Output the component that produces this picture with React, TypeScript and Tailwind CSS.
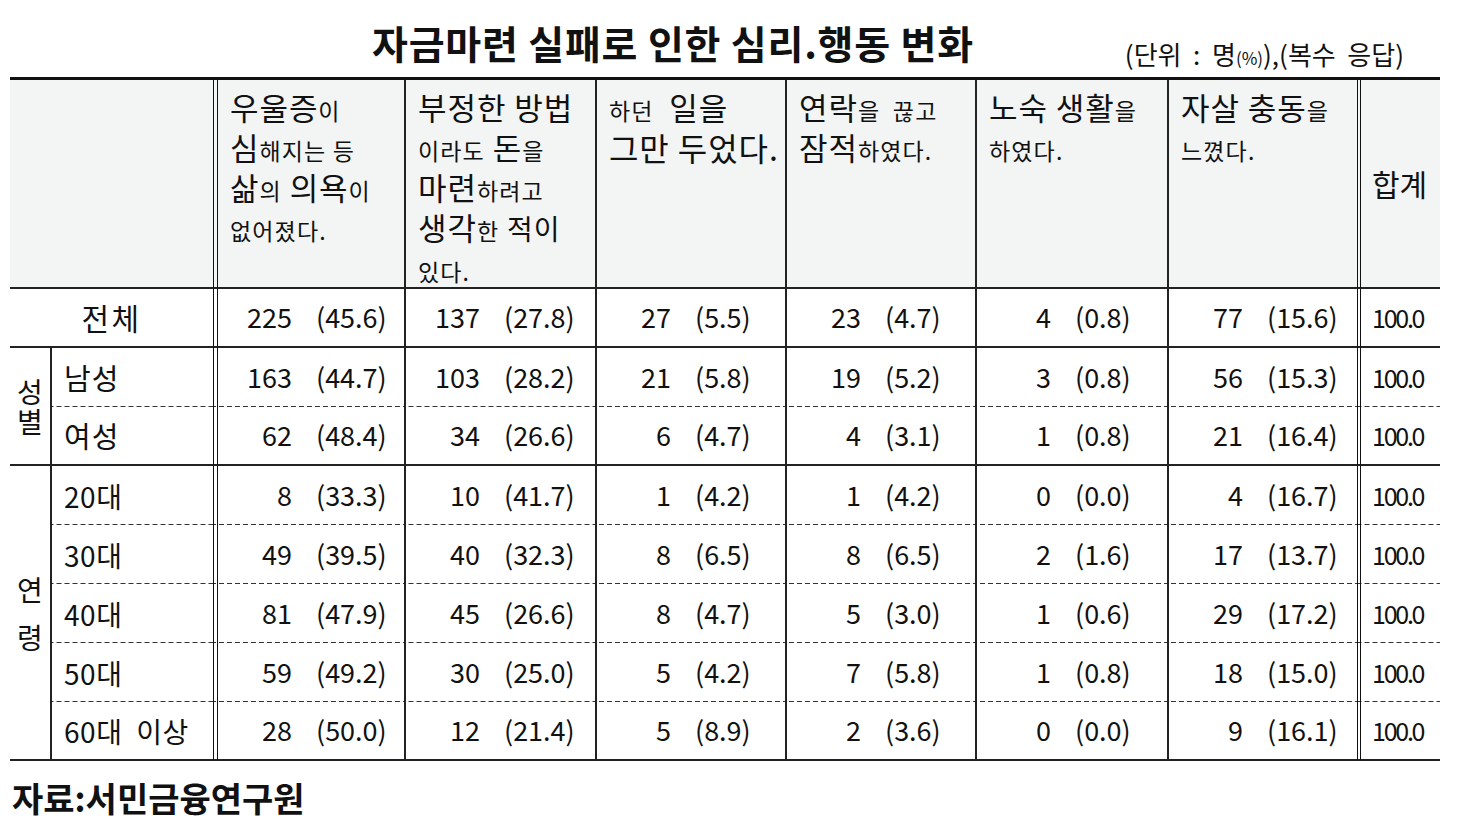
import React from "react";

const font = "[font-family:'Noto_Sans_CJK_KR','Noto_Sans',sans-serif]";

const solidB = "border-b-2 border-b-[#222]";
const dashB = "bg-[linear-gradient(to_right,#333_5px,transparent_5px)] bg-[length:8px_1px] bg-repeat-x bg-bottom";
const rightB = "border-r-2 border-r-[#222]";
const spacer = "border-l border-r border-l-[#111] border-r-[#111]";
const headBg = "bg-[#f3f4f4]";

const S = ({ children }: { children: React.ReactNode }) => (
  <span className="text-[23px] leading-none tracking-[0.05em]">{children}</span>
);

const HeadCell = ({ children, last }: { children: React.ReactNode; last?: boolean }) => (
  <div
    className={`${headBg} ${solidB} ${last ? "" : rightB} pl-[12px] pt-[7px] text-[31px] leading-[40px] tracking-[0.03em] whitespace-nowrap`}
  >
    {children}
  </div>
);

type Row = { label: string; vals: [string, string][]; bottom: "solid" | "dash" };

const total: [string, string][] = [
  ["225", "(45.6)"],
  ["137", "(27.8)"],
  ["27", "(5.5)"],
  ["23", "(4.7)"],
  ["4", "(0.8)"],
  ["77", "(15.6)"],
];

const gender: Row[] = [
  {
    label: "남성",
    bottom: "dash",
    vals: [["163", "(44.7)"], ["103", "(28.2)"], ["21", "(5.8)"], ["19", "(5.2)"], ["3", "(0.8)"], ["56", "(15.3)"]],
  },
  {
    label: "여성",
    bottom: "solid",
    vals: [["62", "(48.4)"], ["34", "(26.6)"], ["6", "(4.7)"], ["4", "(3.1)"], ["1", "(0.8)"], ["21", "(16.4)"]],
  },
];

const age: Row[] = [
  {
    label: "20대",
    bottom: "dash",
    vals: [["8", "(33.3)"], ["10", "(41.7)"], ["1", "(4.2)"], ["1", "(4.2)"], ["0", "(0.0)"], ["4", "(16.7)"]],
  },
  {
    label: "30대",
    bottom: "dash",
    vals: [["49", "(39.5)"], ["40", "(32.3)"], ["8", "(6.5)"], ["8", "(6.5)"], ["2", "(1.6)"], ["17", "(13.7)"]],
  },
  {
    label: "40대",
    bottom: "dash",
    vals: [["81", "(47.9)"], ["45", "(26.6)"], ["8", "(4.7)"], ["5", "(3.0)"], ["1", "(0.6)"], ["29", "(17.2)"]],
  },
  {
    label: "50대",
    bottom: "dash",
    vals: [["59", "(49.2)"], ["30", "(25.0)"], ["5", "(4.2)"], ["7", "(5.8)"], ["1", "(0.8)"], ["18", "(15.0)"]],
  },
  {
    label: "60대\u00a0\u00a0이상",
    bottom: "solid",
    vals: [["28", "(50.0)"], ["12", "(21.4)"], ["5", "(8.9)"], ["2", "(3.6)"], ["0", "(0.0)"], ["9", "(16.1)"]],
  },
];

const Cells = ({ vals, bottom }: { vals: [string, string][]; bottom: string }) => (
  <>
    <div className={`${spacer} ${bottom}`} />
    {vals.map((v, i) => (
      <div key={i} className={`${bottom} ${i < 5 ? rightB : ""} flex items-center text-[27px]`}>
        <span className="w-[74px] text-right">{v[0]}</span>
        <span className="ml-[24px]">{v[1]}</span>
      </div>
    ))}
    <div className={`${spacer} ${bottom}`} />
    <div className={`${bottom} flex items-center pl-[11px] text-[25px] tracking-[-0.09em]`}>100.0</div>
  </>
);

export default function App() {
  return (
    <div className={`w-[1462px] h-[839px] bg-white text-[#111] ${font}`}>
      <div className="flex h-[77px] items-start">
        <div className="ml-[372px] mt-[19px] text-[39px] leading-[46px] tracking-[0.02em] font-bold whitespace-nowrap">
          자금마련 실패로 인한 심리.행동 변화
        </div>
        <div className="ml-auto mr-[58px] mt-[38px] text-[26px] leading-[32px] whitespace-nowrap">
          (단위&nbsp;&nbsp;:&nbsp;&nbsp;명<span className="text-[17px]">(%)</span>),(복수&nbsp;&nbsp;응답)
        </div>
      </div>

      <div className="ml-[10px] w-[1430px]">
        <div className="h-[3px] bg-[#111]" />
        <div className="grid grid-cols-[42px_161px_5px_188px_191px_190px_190px_192px_188px_4px_79px] grid-rows-[209px_repeat(8,59px)]">
          {/* header */}
          <div className={`col-span-2 ${headBg} ${solidB}`} />
          <div className={`${spacer} ${headBg} ${solidB}`} />
          <HeadCell>
            <div>우울증<S>이</S></div>
            <div>심<S>해지는 등</S></div>
            <div>삶<S>의</S> 의욕<S>이</S></div>
            <div><S>없어졌다.</S></div>
          </HeadCell>
          <HeadCell>
            <div>부정한 방법</div>
            <div><S>이라도</S> 돈<S>을</S></div>
            <div>마련<S>하려고</S></div>
            <div>생각<S>한</S> <span className="text-[28px]">적이</span></div>
            <div><S>있다.</S></div>
          </HeadCell>
          <HeadCell>
            <div><S>하던</S>&nbsp; 일을</div>
            <div className="text-[32px]">그만 두었다.</div>
          </HeadCell>
          <HeadCell>
            <div>연락<S>을&nbsp; 끊고</S></div>
            <div>잠적<S>하였다.</S></div>
          </HeadCell>
          <HeadCell>
            <div>노숙 생활<S>을</S></div>
            <div><S>하였다.</S></div>
          </HeadCell>
          <HeadCell last>
            <div>자살 충동<S>을</S></div>
            <div><S>느꼈다.</S></div>
          </HeadCell>
          <div className={`${spacer} ${headBg} ${solidB}`} />
          <div className={`${headBg} ${solidB} flex items-center pl-[11px] text-[30px]`}>합계</div>

          {/* 전체 */}
          <div className={`col-span-2 ${solidB} flex items-center justify-center text-[30px] tracking-[0.08em]`}>
            전체
          </div>
          <Cells vals={total} bottom={solidB} />

          {/* 성별 */}
          <div className={`row-span-2 ${solidB} ${rightB} flex flex-col items-center justify-center text-[28px] leading-[30px]`}>
            <span>성</span>
            <span>별</span>
          </div>
          {gender.map((r) => {
            const b = r.bottom === "solid" ? solidB : dashB;
            return (
              <React.Fragment key={r.label}>
                <div className={`${b} flex items-center pl-[12px] text-[29px] tracking-[0.04em]`}>{r.label}</div>
                <Cells vals={r.vals} bottom={b} />
              </React.Fragment>
            );
          })}

          {/* 연령 */}
          <div className={`row-span-5 ${solidB} ${rightB} flex flex-col items-center justify-center text-[28px] leading-[48px]`}>
            <span>연</span>
            <span>령</span>
          </div>
          {age.map((r) => {
            const b = r.bottom === "solid" ? solidB : dashB;
            return (
              <React.Fragment key={r.label}>
                <div className={`${b} flex items-center pl-[12px] text-[28px] tracking-[0.02em] whitespace-nowrap`}>
                  {r.label}
                </div>
                <Cells vals={r.vals} bottom={b} />
              </React.Fragment>
            );
          })}
        </div>
      </div>

      <div className="ml-[12px] mt-[17px] text-[34px] leading-[40px] font-bold">자료:서민금융연구원</div>
    </div>
  );
}
